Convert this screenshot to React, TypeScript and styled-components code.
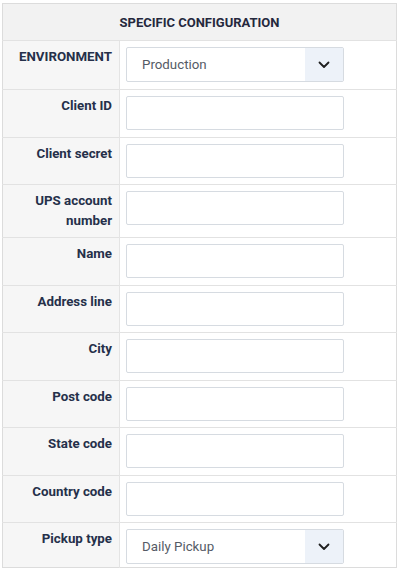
import React from "react";
import styled, { createGlobalStyle } from "styled-components";

const GlobalStyle = createGlobalStyle`
  body {
    margin: 0;
    background: #ffffff;
    font-family: Roboto, "Liberation Sans", Arial, sans-serif;
  }
`;

const Wrapper = styled.div`
  padding: 3px 3px 0 2px;
`;

const Table = styled.table`
  width: 395px;
  border-collapse: collapse;
  border: 1px solid #dcdcdc;
`;

const HeadCell = styled.th`
  height: 36px;
  padding: 0;
  background: #f2f2f2;
  border-bottom: 1px solid #e2e2e2;
  font-size: 13px;
  font-weight: 700;
  color: #25283d;
  text-align: center;
  text-transform: uppercase;
`;

const Row = styled.tr`
  border-top: 1px solid #e2e2e2;
`;

const LabelCell = styled.td`
  width: 109px;
  padding: 6px 7px 6px 0;
  background: #f6f6f6;
  border-right: 1px solid #e4e4e4;
  vertical-align: top;
  text-align: right;
  font-size: 13.3px;
  line-height: 20px;
  font-weight: 700;
  color: #25304a;
`;

const FieldCell = styled.td<{ $last?: boolean; $select?: boolean }>`
  padding: 6px 6px ${({ $last, $select }) => ($last ? "3px" : $select ? "7px" : "6.5px")};
  vertical-align: top;
`;

const TextInput = styled.input`
  display: block;
  box-sizing: border-box;
  width: 218px;
  height: 34px;
  margin: 0;
  padding: 0 10px;
  border: 1px solid #d6dbe1;
  border-radius: 2px;
  background: #fff;
  font-family: inherit;
  font-size: 13px;
  outline: none;
`;

const SelectBox = styled.div`
  display: flex;
  box-sizing: border-box;
  width: 218px;
  height: 35px;
  border: 1px solid #d6dbe1;
  border-radius: 2px;
  background: #fff;
  overflow: hidden;
`;

const SelectValue = styled.div`
  flex: 1;
  display: flex;
  align-items: center;
  padding-left: 15px;
  font-size: 13.3px;
  color: #555b66;
`;

const SelectArrow = styled.div`
  width: 38px;
  display: flex;
  align-items: center;
  justify-content: center;
  background: #edf2f9;
`;

const Chevron = () => (
  <svg width="12" height="8" viewBox="0 0 12 8" fill="none">
    <path d="M1.5 1.5L6 6l4.5-4.5" stroke="#1f1f1f" strokeWidth="1.8" strokeLinecap="round" strokeLinejoin="round" />
  </svg>
);

const Select = ({ value }: { value: string }) => (
  <SelectBox>
    <SelectValue>{value}</SelectValue>
    <SelectArrow>
      <Chevron />
    </SelectArrow>
  </SelectBox>
);

type Field = { label: React.ReactNode; select?: string };

const fields: Field[] = [
  { label: "ENVIRONMENT", select: "Production" },
  { label: "Client ID" },
  { label: "Client secret" },
  { label: <>UPS account<br />number</> },
  { label: "Name" },
  { label: "Address line" },
  { label: "City" },
  { label: "Post code" },
  { label: "State code" },
  { label: "Country code" },
  { label: "Pickup type", select: "Daily Pickup" },
];

export default function App() {
  return (
    <>
      <GlobalStyle />
      <Wrapper>
        <Table>
          <thead>
            <tr>
              <HeadCell colSpan={2}>Specific configuration</HeadCell>
            </tr>
          </thead>
          <tbody>
            {fields.map((f, i) => (
              <Row key={i}>
                <LabelCell>{f.label}</LabelCell>
                <FieldCell $last={i === fields.length - 1} $select={!!f.select}>
                  {f.select ? <Select value={f.select} /> : <TextInput type="text" />}
                </FieldCell>
              </Row>
            ))}
          </tbody>
        </Table>
      </Wrapper>
    </>
  );
}
